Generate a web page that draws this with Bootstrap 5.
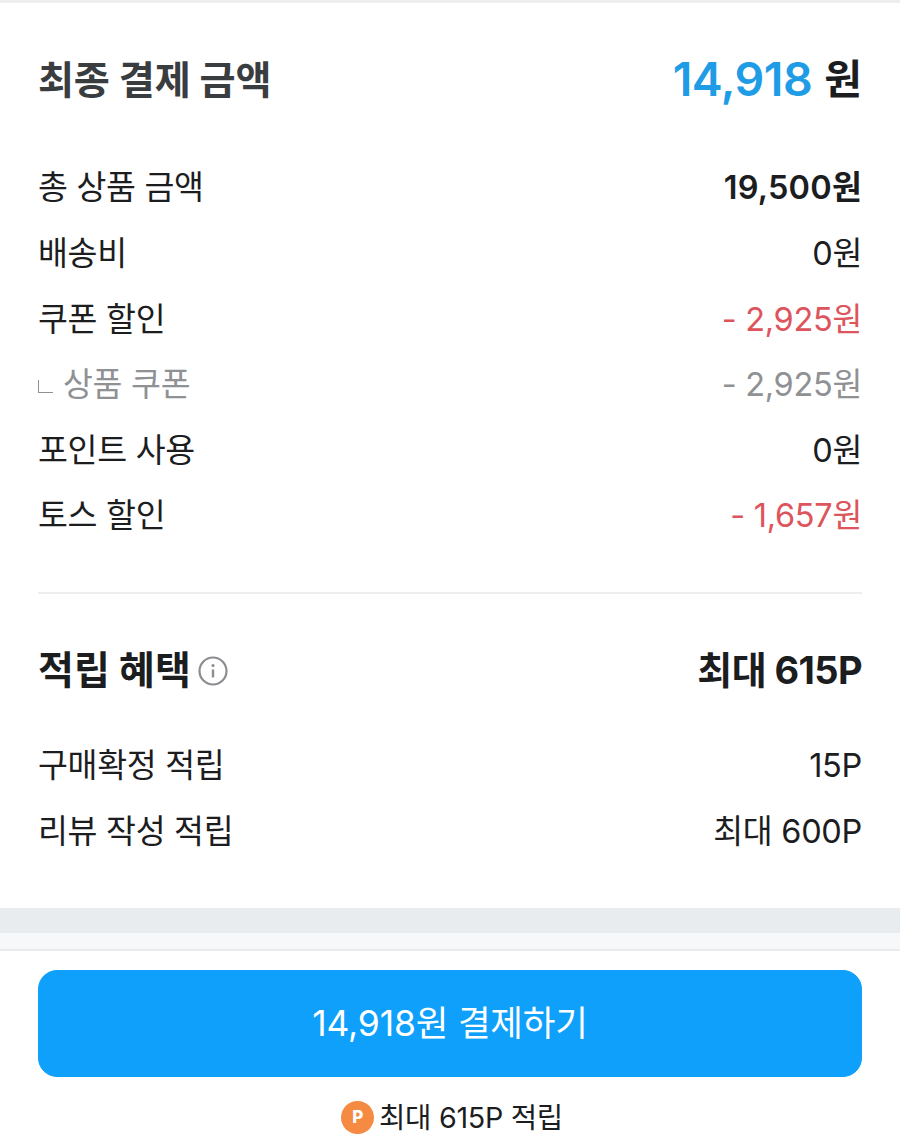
<!DOCTYPE html>
<html lang="ko">

<head>
    <meta charset="UTF-8">
    <title>결제하기</title>
    <link href="https://cdn.jsdelivr.net/npm/bootstrap@5.3.3/dist/css/bootstrap.min.css" rel="stylesheet">
    <style>
        body {
            width: 900px;
            height: 1146px;
            overflow: hidden;
            background: #fff;
            color: #1c1d1f;
            font-family: Inter, "Noto Sans CJK KR", sans-serif;
        }

        .top-line { height: 3px; background: #eceef0; }
        .summary { padding: 0 38px; }
        .title-row { height: 66px; margin-top: 44px; margin-bottom: 43px; }
        .title-text { font-size: 39.2px; font-weight: 700; color: #3a3d40; letter-spacing: -.2px; }
        .total-num { font-size: 46.5px; font-weight: 600; color: #1f9ce6; letter-spacing: -.5px; }
        .total-unit { font-size: 41px; font-weight: 700; margin-left: 12px; }
        .line-row { height: 65.6px; font-size: 32.5px; letter-spacing: -.3px; }
        .line-strong { font-weight: 600; letter-spacing: .2px; }
        .minus { color: #dd545c; }
        .muted-row { color: #8f9194; }
        .sub-mark { width: 15px; height: 13px; border-left: 1.5px solid #8f9194; border-bottom: 1.5px solid #8f9194; margin-right: 10px; margin-top: 2px; }
        .section-line { height: 2px; background: #eceef0; margin-top: 42px; }
        .point-head { height: 66px; margin-top: 44px; margin-bottom: 30px; font-size: 39px; font-weight: 700; }
        .point-total { font-size: 38px; font-weight: 700; letter-spacing: -.6px; }
        .info-icon { margin-left: -2px; }
        .gap-band { height: 25px; background: #e9ecef; margin-top: 43px; }
        .gap-pale { height: 18px; background: #f7f8f9; border-bottom: 2px solid #e9ebee; }
        .pay-area { padding: 19px 38px 0; }
        .pay-btn { height: 107px; font-size: 35.5px; background: #0ea0fb; border-color: #0ea0fb; border-radius: 19px; letter-spacing: -.2px; }
        .earn-note { margin-top: 19px; padding-left: 4px; font-size: 28.7px; letter-spacing: -.3px; gap: 5px; }
        .p-badge { width: 33px; height: 33px; border-radius: 50%; background: #f58a42; color: #fff; font-size: 17px; font-weight: 800; }
    </style>
</head>

<body>
    <div class="top-line"></div>

    <div class="summary">
        <div class="title-row d-flex justify-content-between align-items-center">
            <span class="title-text">최종 결제 금액</span>
            <span class="d-flex align-items-center"><span class="total-num">14,918</span><span class="total-unit">원</span></span>
        </div>

        <div class="line-row d-flex justify-content-between align-items-center"><span>총 상품 금액</span><span class="line-strong">19,500원</span></div>
        <div class="line-row d-flex justify-content-between align-items-center"><span>배송비</span><span>0원</span></div>
        <div class="line-row d-flex justify-content-between align-items-center"><span>쿠폰 할인</span><span class="minus">- 2,925원</span></div>
        <div class="line-row muted-row d-flex justify-content-between align-items-center"><span class="d-flex align-items-center"><span class="sub-mark"></span>상품 쿠폰</span><span>- 2,925원</span></div>
        <div class="line-row d-flex justify-content-between align-items-center"><span>포인트 사용</span><span>0원</span></div>
        <div class="line-row d-flex justify-content-between align-items-center"><span>토스 할인</span><span class="minus">- 1,657원</span></div>

        <div class="section-line"></div>

        <div class="point-head d-flex justify-content-between align-items-center">
            <span class="d-flex align-items-center gap-2">적립 혜택
                <svg class="info-icon" width="32" height="32" viewBox="0 0 32 32" fill="none">
                    <circle cx="16" cy="16" r="13.5" stroke="#8b8d90" stroke-width="2.2" />
                    <circle cx="16" cy="10.5" r="1.6" fill="#8b8d90" />
                    <path d="M16 14.5v8" stroke="#8b8d90" stroke-width="2.4" />
                </svg>
            </span>
            <span class="point-total">최대 615P</span>
        </div>

        <div class="line-row d-flex justify-content-between align-items-center"><span>구매확정 적립</span><span>15P</span></div>
        <div class="line-row d-flex justify-content-between align-items-center"><span>리뷰 작성 적립</span><span>최대 600P</span></div>
    </div>

    <div class="gap-band"></div>
    <div class="gap-pale"></div>

    <div class="pay-area">
        <button type="button" class="pay-btn btn btn-primary w-100">14,918원 결제하기</button>
        <div class="earn-note d-flex justify-content-center align-items-center">
            <span class="p-badge d-flex justify-content-center align-items-center">P</span>
            <span>최대 615P 적립</span>
        </div>
    </div>

    <script src="https://cdn.jsdelivr.net/npm/bootstrap@5.3.3/dist/js/bootstrap.bundle.min.js"></script>
</body>

</html>
